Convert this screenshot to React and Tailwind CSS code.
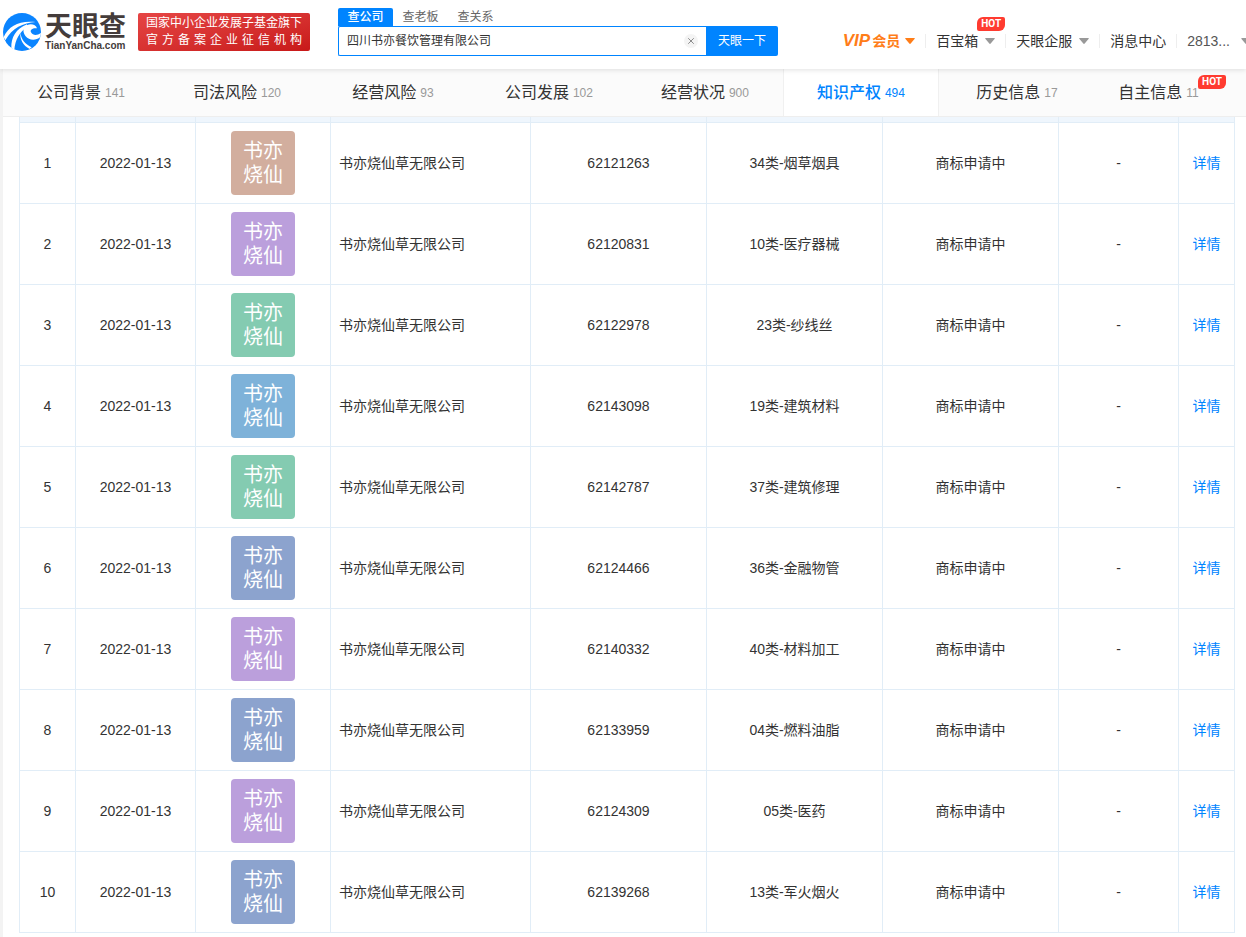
import { useState } from 'react';
import { X } from 'lucide-react';

const tabs = [
    { label: '公司背景', count: 141 },
    { label: '司法风险', count: 120 },
    { label: '经营风险', count: 93 },
    { label: '公司发展', count: 102 },
    { label: '经营状况', count: 900 },
    { label: '知识产权', count: 494 },
    { label: '历史信息', count: 17 },
    { label: '自主信息', count: 11, hot: true },
];

const searchTypes = ['查公司', '查老板', '查关系'];

const rows = [
    { id: 1, no: '62121263', type: '34类-烟草烟具', color: 'bg-[#d2ae9e]' },
    { id: 2, no: '62120831', type: '10类-医疗器械', color: 'bg-[#bb9fdc]' },
    { id: 3, no: '62122978', type: '23类-纱线丝', color: 'bg-[#84cbb1]' },
    { id: 4, no: '62143098', type: '19类-建筑材料', color: 'bg-[#7eb2d9]' },
    { id: 5, no: '62142787', type: '37类-建筑修理', color: 'bg-[#84cbb1]' },
    { id: 6, no: '62124466', type: '36类-金融物管', color: 'bg-[#8ca3ce]' },
    { id: 7, no: '62140332', type: '40类-材料加工', color: 'bg-[#bb9fdc]' },
    { id: 8, no: '62133959', type: '04类-燃料油脂', color: 'bg-[#8ca3ce]' },
    { id: 9, no: '62124309', type: '05类-医药', color: 'bg-[#bb9fdc]' },
    { id: 10, no: '62139268', type: '13类-军火烟火', color: 'bg-[#8ca3ce]' },
];

const columns = [
    'w-[56px]',
    'w-[120px]',
    'w-[135px]',
    'w-[200px]',
    'w-[176px]',
    'w-[176px]',
    'w-[176px]',
    'w-[120px]',
    'w-[56px]',
];

function Caret({ className }) {
    return (
        <svg viewBox="0 0 10 6" className={`h-[6px] w-[10px] shrink-0 ${className}`} fill="currentColor" aria-hidden="true">
            <path d="M1 0h8c.8 0 1 .6.5 1.1L5.7 5.5c-.4.5-1 .5-1.4 0L.5 1.1C0 .6.2 0 1 0Z" />
        </svg>
    );
}

function Hot({ className }) {
    return (
        <span
            className={`absolute flex h-[14px] w-7 items-center justify-center rounded-tl-md rounded-tr-xs rounded-br-md rounded-bl-xs bg-[#ff3b30] font-['Roboto',sans-serif] text-[10px] leading-none font-bold text-white ${className}`}
        >
            HOT
        </span>
    );
}

function Divider() {
    return <span className="mx-[10px] h-[14px] w-px shrink-0 bg-[#eeeeee]" />;
}

function Logo() {
    return (
        <a href="#" className="flex shrink-0 items-center gap-1">
            <svg viewBox="0 0 114 114" className="h-[38px] w-[38px]" aria-hidden="true">
                <circle cx="57" cy="57" r="57" fill="#0a84ff" />
                {/* upper streak */}
                <path d="M2 72C18 38 48 22 98 27C60 30 28 44 7 82Z" fill="#fff" />
                {/* lower streak */}
                <path d="M25 105C24 74 38 48 72 34L72 42C50 56 36 82 34 110Z" fill="#fff" />
                {/* eye and the opening at its lower right */}
                <path d="M64 42C76 30 98 32 102 46C90 44 80 50 84 58C90 68 102 68 114 60L112 72C98 84 78 82 68 70C60 60 60 50 64 42Z" fill="#fff" />
                {/* tail */}
                <path d="M52 58C54 78 66 94 86 103L80 108C60 98 50 80 52 58Z" fill="#fff" />
            </svg>
            <span className="flex flex-col font-bold text-[#443c3b]">
                <span className="text-[27px] leading-7">天眼查</span>
                <span className="text-[10px] leading-[10px]">TianYanCha.com</span>
            </span>
        </a>
    );
}

function SearchBox() {
    const [type, setType] = useState('查公司');
    const [keyword, setKeyword] = useState('四川书亦餐饮管理有限公司');

    return (
        <div className="mt-2 ml-7 w-[440px] shrink-0 text-xs">
            <div className="flex h-[18px]">
                {searchTypes.map((item) => (
                    <button
                        key={item}
                        type="button"
                        onClick={() => setType(item)}
                        className={`h-[18px] w-[55px] rounded-t-xs leading-[18px] ${item === type ? 'bg-[#0084ff] font-medium text-white' : 'text-[#666666]'}`}
                    >
                        {item}
                    </button>
                ))}
            </div>
            <form className="flex h-[30px]" onSubmit={(e) => e.preventDefault()}>
                <div className="flex flex-1 items-center rounded-l-xs border border-r-0 border-[#0084ff] pr-2 pl-2">
                    <input
                        type="text"
                        aria-label="公司名称"
                        value={keyword}
                        onChange={(e) => setKeyword(e.target.value)}
                        className="min-w-0 flex-1 text-[#333333] outline-none"
                    />
                    <button
                        type="button"
                        aria-label="清空"
                        onClick={() => setKeyword('')}
                        className="flex h-[14px] w-[14px] items-center justify-center rounded-full bg-[#f4f4f4] text-[#777777]"
                    >
                        <X size={10} />
                    </button>
                </div>
                <button type="submit" className="w-[72px] rounded-r-xs bg-[#0084ff] text-white">
                    天眼一下
                </button>
            </form>
        </div>
    );
}

function Header() {
    return (
        <header className="relative z-10 flex h-[69px] items-start overflow-x-clip bg-white pl-[3px] shadow-[0_1px_5px_rgba(0,0,0,0.12)]">
            <div className="mt-[13px] flex shrink-0 items-center gap-3">
                <Logo />
                <div className="flex h-[38px] w-[172px] flex-col justify-center rounded-xs bg-linear-to-br from-[#e64545] to-[#c81818] px-2 text-xs leading-[17px] text-white">
                    <p className="whitespace-nowrap">国家中小企业发展子基金旗下</p>
                    <p className="[text-align-last:justify]">官 方 备 案 企 业 征 信 机 构</p>
                </div>
            </div>
            <SearchBox />
            <nav className="mt-[31px] -mr-[5px] ml-auto flex h-5 shrink-0 items-center text-sm text-[#333333]">
                <a href="#" className="flex items-center font-bold text-[#ff7d18]">
                    <span className="mr-[2px] text-[17px] leading-5 italic">VIP</span>
                    会员
                    <Caret className="ml-[5px]" />
                </a>
                <Divider />
                <a href="#" className="relative flex items-center">
                    百宝箱
                    <Caret className="ml-[7px] text-[#999999]" />
                    <Hot className="-top-[14px] left-[41px]" />
                </a>
                <Divider />
                <a href="#" className="flex items-center">
                    天眼企服
                    <Caret className="ml-[7px] text-[#999999]" />
                </a>
                <Divider />
                <a href="#">消息中心</a>
                <Divider />
                <a href="#" className="flex items-center text-[#555555]">
                    2813...
                    <Caret className="ml-[11px] text-[#999999]" />
                </a>
            </nav>
        </header>
    );
}

function TabBar({ active, onChange }) {
    return (
        <div className="flex h-12 border-b border-[#eeeeee] bg-[#fbfbfb]">
            {tabs.map((tab) => {
                const isActive = tab.label === active;

                return (
                    <button
                        key={tab.label}
                        type="button"
                        onClick={() => onChange(tab.label)}
                        className={`relative flex shrink-0 items-center justify-center gap-1 border-[#f0f0f0] text-base whitespace-nowrap ${tab.hot ? 'flex-1 pr-6' : 'w-[12.55%]'
                            } ${isActive ? 'border-x bg-white font-medium text-[#0084ff]' : 'text-[#333333]'}`}
                    >
                        {tab.label}
                        <span className={`text-xs font-normal ${isActive ? '' : 'text-[#999999]'}`}>{tab.count}</span>
                        {tab.hot && <Hot className="top-[6px] right-5" />}
                    </button>
                );
            })}
        </div>
    );
}

function TrademarkTable() {
    return (
        <table className="w-full table-fixed border-separate border-spacing-0 border-l border-[#e1edf7] text-center text-sm text-[#333333]">
            <colgroup>
                {columns.map((width, index) => (
                    <col key={index} className={width} />
                ))}
            </colgroup>
            <thead>
                <tr>
                    {columns.map((width, index) => (
                        <th key={index} className="h-[6px] border-r border-b border-[#e1edf7] bg-[#eff6fd] p-0" />
                    ))}
                </tr>
            </thead>
            <tbody className="[&_td]:h-[81px] [&_td]:border-r [&_td]:border-b [&_td]:border-[#e1edf7] [&_td]:p-0">
                {rows.map((row) => (
                    <tr key={row.id}>
                        <td>{row.id}</td>
                        <td>2022-01-13</td>
                        <td>
                            <div className={`mx-auto flex h-16 w-16 items-center justify-center rounded-sm text-xl leading-6 text-white ${row.color}`}>
                                <span className="w-10">书亦烧仙</span>
                            </div>
                        </td>
                        <td>
                            <p className="pl-2 text-left">书亦烧仙草无限公司</p>
                        </td>
                        <td>{row.no}</td>
                        <td>{row.type}</td>
                        <td>商标申请中</td>
                        <td>-</td>
                        <td>
                            <a href="#" className="text-[#0084ff]">详情</a>
                        </td>
                    </tr>
                ))}
            </tbody>
        </table>
    );
}

export default function App() {
    const [activeTab, setActiveTab] = useState('知识产权');

    return (
        <div className="min-h-screen overflow-x-clip bg-[#f3f3f3] font-['Liberation_Sans','Noto_Sans_CJK_SC',sans-serif]">
            <Header />
            <main className="ml-[3px] min-h-[868px] bg-white">
                <TabBar active={activeTab} onChange={setActiveTab} />
                <div className="pr-[11px] pl-4">
                    <TrademarkTable />
                </div>
            </main>
        </div>
    );
}
